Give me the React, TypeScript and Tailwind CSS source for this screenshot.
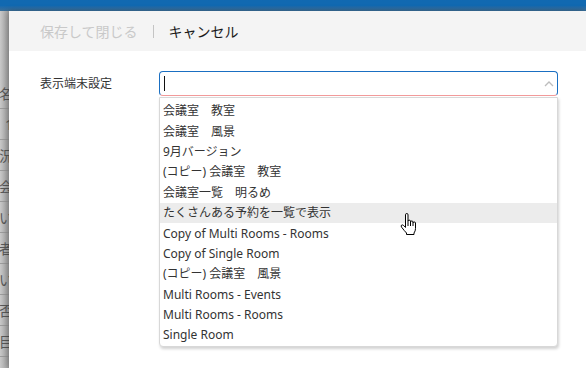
import React from 'react';

const options = [
  '会議室　教室',
  '会議室　風景',
  '9月バージョン',
  '(コピー) 会議室　教室',
  '会議室一覧　明るめ',
  'たくさんある予約を一覧で表示',
  'Copy of Multi Rooms - Rooms',
  'Copy of Single Room',
  '(コピー) 会議室　風景',
  'Multi Rooms - Events',
  'Multi Rooms - Rooms',
  'Single Room',
];

// fragments of the page table that peek out behind the modal
const behindRows = ['氏名', '1', '状況', '会', 'い', 'の者', 'い', '否', '目'];

const jpFont = { fontFamily: '"Noto Sans", "Noto Sans CJK JP", sans-serif' };

const HandCursor: React.FC = () => (
  <svg width="18" height="23" viewBox="0 0 18 23" className="absolute left-[400px] top-[213px]">
    <path
      d="M5.5 1.8 Q5.5 0.5 6.75 0.5 Q8 0.5 8 1.8 L8 8.2 Q8 7.2 9.25 7.2 Q10.5 7.2 10.5 8.2 L10.5 9 Q10.5 8 11.75 8 Q13 8 13 9 L13 10 Q13 9 14.25 9 Q15.5 9 15.5 10 L15.5 15.5 Q15.5 18 14 20 L14 21.5 L6.5 21.5 L6.5 20 Q4.5 18 1.6 14.2 Q0.6 12.8 1.6 12.1 Q2.6 11.5 3.7 12.6 L5.5 14.4 Z"
      fill="#fff"
      stroke="#000"
      strokeWidth="1"
      strokeLinejoin="round"
    />
    <path d="M8 8.2 L8 13 M10.5 9 L10.5 13 M13 10 L13 13" stroke="#000" strokeWidth="1" />
  </svg>
);

export default function App() {
  return (
    <div className="relative w-[586px] h-[368px] overflow-hidden bg-[#c4c4c4] flex flex-col" style={jpFont}>
      {/* app bar, dimmed by the overlay */}
      <div className="h-[11px] shrink-0 bg-gradient-to-b from-[#1169b1] via-[#1169b1] to-[#3a6f98]" />

      <div className="flex flex-1 min-h-0">
        {/* page behind the modal */}
        <div className="w-[9px] shrink-0 overflow-hidden bg-gradient-to-r from-[#c9c9c9] to-[#a3a3a3]">
          <div className="h-[67px]" />
          {behindRows.map((t, i) => (
            <div
              key={i}
              className="h-[31px] border-b border-[#9c9c9c] flex items-center justify-end whitespace-nowrap text-[14px] text-[#5a5a5a] -mr-[4px]"
            >
              {t}
            </div>
          ))}
        </div>

        {/* modal */}
        <div className="flex-1 bg-white rounded-tl-[4px] shadow-[-2px_0_6px_rgba(0,0,0,0.25)] flex flex-col">
          <div className="h-[40px] shrink-0 bg-[#f4f4f4] flex items-center pl-[31px] text-[14px]">
            <span className="text-[#c9c9c9]">保存して閉じる</span>
            <span className="mx-[15px] w-px h-[13px] bg-[#c4c4c4]" />
            <span className="text-[#1a1a1a]">キャンセル</span>
          </div>

          <div className="pt-[20px] pl-[31px] pr-[28px] flex items-center">
            <div className="w-[119px] shrink-0 text-[12px] text-[#333]">表示端末設定</div>
            <div className="relative flex-1">
              <div className="h-[25px] rounded-[4px] border border-[#1a6fc2] border-b-[#f29a9a] flex items-center pl-[4px] pr-[3px]">
                <span className="w-px h-[15px] bg-[#111]" />
                <svg width="10" height="6" viewBox="0 0 10 6" className="ml-auto">
                  <path d="M1 5 L5 1 L9 5" fill="none" stroke="#bdbdbd" strokeWidth="1.3" />
                </svg>
              </div>

              {/* open list */}
              <div className="absolute left-0 right-0 top-[26px] bg-white border border-[#d8d8d8] rounded-b-[4px] shadow-[1px_2px_3px_rgba(0,0,0,0.18)] pt-[3px]">
                {options.map((o, i) => (
                  <div
                    key={i}
                    className={`h-[20.4px] flex items-center pl-[3px] text-[12px] text-[#333] whitespace-nowrap ${
                      i === 5 ? 'bg-[#ececec]' : ''
                    }`}
                  >
                    {o}
                  </div>
                ))}
              </div>
            </div>
          </div>
        </div>
      </div>

      <HandCursor />
    </div>
  );
}
